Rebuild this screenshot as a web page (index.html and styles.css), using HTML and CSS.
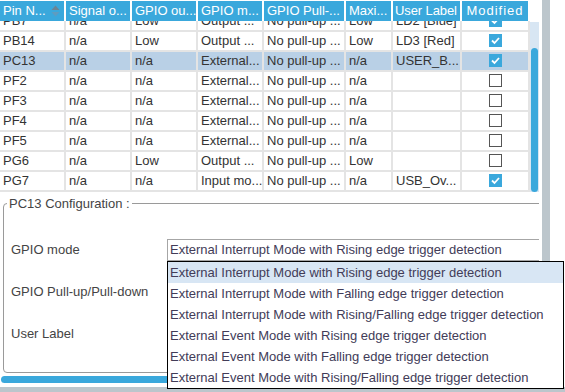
FILE: index.html
```html
<!DOCTYPE html>
<html lang="en">
<head>
    <meta charset="UTF-8">
    <meta name="viewport" content="width=device-width, initial-scale=1.0">
    <title>GPIO Configuration</title>
    <link rel="stylesheet" href="styles.css">
</head>
<body>
    <div class="screen">
        <div class="panel">
            <div class="grid">
                <div class="grid-main">
                    <div class="row head">
                        <div class="cell sortable"><span>Pin N...</span>
                            <svg class="sort" width="9" height="12" viewBox="0 0 9 12">
                                <polygon points="0.5,5 4.5,0.5 8.5,5" fill="#6b8494"/>
                                <polygon points="0.5,7 4.5,11.5 8.5,7" fill="#5f9cc0"/>
                            </svg>
                        </div>
                        <div class="cell">Signal o...</div>
                        <div class="cell">GPIO ou...</div>
                        <div class="cell">GPIO m...</div>
                        <div class="cell">GPIO Pull-...</div>
                        <div class="cell">Maxi...</div>
                        <div class="cell tight">User Label</div>
                        <div class="cell center spaced">Modified</div>
                    </div>
                    <div class="body">
                        <div class="rows">
                            <div class="row">
                                <div class="cell">PB7</div><div class="cell">n/a</div><div class="cell">Low</div>
                                <div class="cell">Output ...</div><div class="cell">No pull-up ...</div><div class="cell">Low</div>
                                <div class="cell">LD2 [Blue]</div><div class="cell center"><span class="check on"></span></div>
                            </div>
                            <div class="row">
                                <div class="cell">PB14</div><div class="cell">n/a</div><div class="cell">Low</div>
                                <div class="cell">Output ...</div><div class="cell">No pull-up ...</div><div class="cell">Low</div>
                                <div class="cell">LD3 [Red]</div><div class="cell center"><span class="check on"></span></div>
                            </div>
                            <div class="row selected">
                                <div class="cell">PC13</div><div class="cell">n/a</div><div class="cell">n/a</div>
                                <div class="cell">External...</div><div class="cell">No pull-up ...</div><div class="cell">n/a</div>
                                <div class="cell">USER_B...</div><div class="cell center"><span class="check on"></span></div>
                            </div>
                            <div class="row">
                                <div class="cell">PF2</div><div class="cell">n/a</div><div class="cell">n/a</div>
                                <div class="cell">External...</div><div class="cell">No pull-up ...</div><div class="cell">n/a</div>
                                <div class="cell"></div><div class="cell center"><span class="check"></span></div>
                            </div>
                            <div class="row">
                                <div class="cell">PF3</div><div class="cell">n/a</div><div class="cell">n/a</div>
                                <div class="cell">External...</div><div class="cell">No pull-up ...</div><div class="cell">n/a</div>
                                <div class="cell"></div><div class="cell center"><span class="check"></span></div>
                            </div>
                            <div class="row">
                                <div class="cell">PF4</div><div class="cell">n/a</div><div class="cell">n/a</div>
                                <div class="cell">External...</div><div class="cell">No pull-up ...</div><div class="cell">n/a</div>
                                <div class="cell"></div><div class="cell center"><span class="check"></span></div>
                            </div>
                            <div class="row">
                                <div class="cell">PF5</div><div class="cell">n/a</div><div class="cell">n/a</div>
                                <div class="cell">External...</div><div class="cell">No pull-up ...</div><div class="cell">n/a</div>
                                <div class="cell"></div><div class="cell center"><span class="check"></span></div>
                            </div>
                            <div class="row">
                                <div class="cell">PG6</div><div class="cell">n/a</div><div class="cell">Low</div>
                                <div class="cell">Output ...</div><div class="cell">No pull-up ...</div><div class="cell">Low</div>
                                <div class="cell"></div><div class="cell center"><span class="check"></span></div>
                            </div>
                            <div class="row">
                                <div class="cell">PG7</div><div class="cell">n/a</div><div class="cell">n/a</div>
                                <div class="cell">Input mo...</div><div class="cell">No pull-up ...</div><div class="cell">n/a</div>
                                <div class="cell">USB_Ov...</div><div class="cell center"><span class="check on"></span></div>
                            </div>
                        </div>
                    </div>
                </div>
                <div class="vscroll"><div class="vthumb"></div></div>
            </div>

            <fieldset class="config">
                <legend>PC13 Configuration :</legend>
                <div class="form">
                    <label>GPIO mode</label>
                    <div class="combo">External Interrupt Mode with Rising edge trigger detection</div>
                    <label>GPIO Pull-up/Pull-down</label>
                    <div></div>
                    <label>User Label</label>
                    <div></div>
                </div>
            </fieldset>
            <div class="hscroll"></div>
        </div>
        <div class="splitter"></div>
    </div>
    <div class="footer"></div>

    <ul class="popup">
        <li class="active">External Interrupt Mode with Rising edge trigger detection</li>
        <li>External Interrupt Mode with Falling edge trigger detection</li>
        <li>External Interrupt Mode with Rising/Falling edge trigger detection</li>
        <li>External Event Mode with Rising edge trigger detection</li>
        <li>External Event Mode with Falling edge trigger detection</li>
        <li>External Event Mode with Rising/Falling edge trigger detection</li>
    </ul>
</body>
</html>
```

FILE: styles.css
```css
body {
    margin: 0;
    width: 565px;
    height: 392px;
    overflow: hidden;
    position: relative;
    background: #fff;
    color: #333;
    font-family: "Liberation Sans", Arial, sans-serif;
    font-size: 13px;
}
.screen {
    display: flex;
    height: 387px;
}
.panel {
    width: 539px;
    overflow: hidden;
    display: flex;
    flex-direction: column;
}
.splitter {
    width: 8px;
    margin-left: 3px;
    background: #bcc6cc;
}
.footer {
    height: 5px;
    background: #bcc6cc;
}

/* table */
.grid {
    display: flex;
    height: 192px;
    flex-shrink: 0;
}
.grid-main {
    width: 530px;
}
.row {
    display: grid;
    grid-template-columns: 66px 66px 66px 66px 82px 47px 69px 68px;
    height: 20px;
}
.cell {
    box-sizing: border-box;
    padding: 0 3px;
    line-height: 18px;
    white-space: nowrap;
    overflow: hidden;
    border-right: 2px solid #e4e4e4;
    border-bottom: 2px solid #e4e4e4;
}
.cell.center {
    text-align: center;
}
.head {
    margin-top: 1px;
}
.head .cell {
    background: #3aa8dc;
    color: #fff;
    line-height: 20px;
    border: none;
    border-right: 2px solid #fff;
    padding: 0 0 0 3px;
}
.head .tight {
    padding-left: 2px;
    letter-spacing: -0.1px;
}
.head .spaced {
    letter-spacing: 1px;
    padding: 0;
}
.sortable {
    display: flex;
    align-items: center;
    justify-content: space-between;
}
.sort {
    margin-right: 4px;
    flex-shrink: 0;
}
.body {
    height: 171px;
    overflow: hidden;
}
.rows {
    margin-top: -9px;
}
.selected {
    background: #b9d0e6;
}
.check {
    display: inline-block;
    box-sizing: border-box;
    width: 13px;
    height: 13px;
    vertical-align: middle;
    margin-top: -2px;
    border: 1px solid #555;
    background: #fff;
}
.check.on {
    border: none;
    background: #3aa8dc url("data:image/svg+xml,%3Csvg xmlns='http://www.w3.org/2000/svg' width='13' height='13'%3E%3Cpath d='M3 6.5l2.5 2.5 4.5-5' fill='none' stroke='%23fff' stroke-width='1.8'/%3E%3C/svg%3E") no-repeat;
}
.vscroll {
    width: 9px;
    margin-top: 22px;
    background: #d8e6f3;
    display: flex;
    flex-direction: column;
}
.vthumb {
    flex: 1;
    margin: 26px 1px 0 1px;
    background: #3aa8dc;
    border-radius: 4px;
}

/* configuration */
.config {
    margin: 4px -30px 0 3px;
    padding: 0 0 27px 0;
    border: 1px solid #9a9a9a;
    border-radius: 4px;
    min-width: 0;
}
.config legend {
    margin-left: 3px;
    padding: 0 2px;
    line-height: 15px;
    color: #444;
}
.form {
    display: grid;
    grid-template-columns: 156px 1fr;
    grid-auto-rows: 22px;
    row-gap: 20px;
    margin-top: 28px;
    padding-left: 7px;
}
.form label {
    line-height: 22px;
    color: #444;
}
.combo {
    box-sizing: border-box;
    border: 1px solid #a6a6a6;
    padding-left: 2px;
    line-height: 20px;
    color: #423c58;
    white-space: nowrap;
}
.hscroll {
    height: 7px;
    margin: 3px 0 0 1px;
    background: #3aa8dc;
    border-radius: 4px;
    flex-shrink: 0;
}

/* dropdown list */
.popup {
    position: absolute;
    left: 167px;
    top: 261px;
    width: 397px;
    box-sizing: border-box;
    margin: 0;
    padding: 0;
    list-style: none;
    background: #fff;
    border: 1px solid #000;
}
.popup li {
    height: 21px;
    line-height: 21px;
    padding-left: 2px;
    color: #423c58;
    white-space: nowrap;
}
.popup li.active {
    background: #d8e6f4;
}
```
